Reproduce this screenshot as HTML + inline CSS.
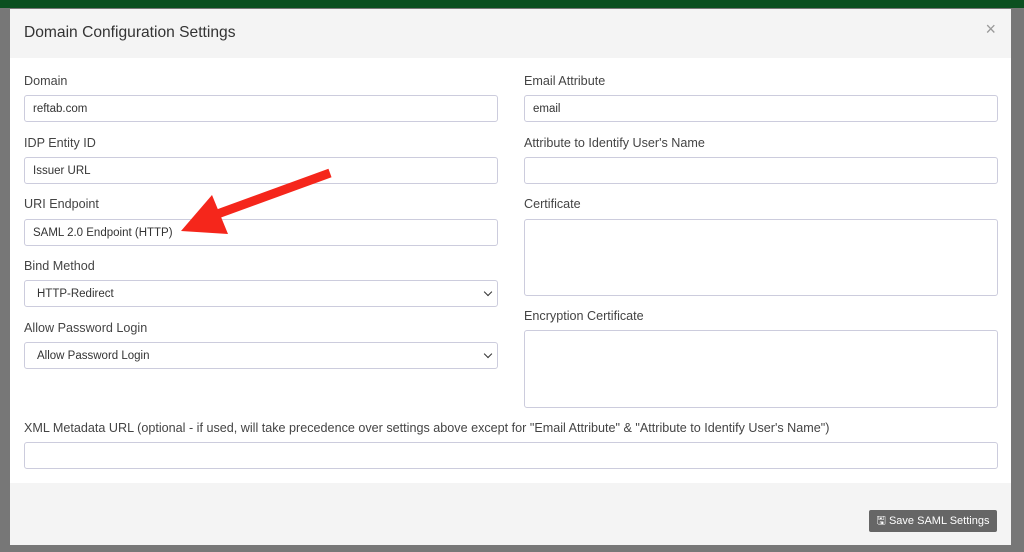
<!DOCTYPE html>
<html><head><style>
*{box-sizing:border-box;margin:0;padding:0}
body{width:1024px;height:552px;background:#777;font-family:"Liberation Sans",sans-serif;position:relative;overflow:hidden}
.green{position:absolute;left:0;top:0;width:1024px;height:8px;background:#0b5020}
.modal{position:absolute;left:10px;top:9px;width:1001px;height:536px;background:#fff}
.hdr{position:absolute;left:0;top:0;width:100%;height:49px;background:#f4f4f4}
.hdr h1{position:absolute;left:14px;top:15px;font-size:15.6px;font-weight:normal;color:#333}
.x{position:absolute;right:15px;top:10px;font-size:18px;color:#999}
.ftr{position:absolute;left:0;top:474px;width:100%;height:62px;background:#f4f4f4}
.btn{position:absolute;left:859px;top:27px;width:128px;height:22px;background:#666;border-radius:2px;color:#fff;font-size:11px;line-height:22px;text-align:center}
.lbl{position:absolute;font-size:12.6px;color:#444}
.in{position:absolute;border:1px solid #ccd;border-radius:3px;background:#fff;font-size:11.5px;color:#333;padding-left:8px;line-height:27px}
.sel:after{content:"";position:absolute;right:6px;top:8px;width:5px;height:5px;border-right:1.5px solid #333;border-bottom:1.5px solid #333;transform:rotate(45deg)}
</style></head><body>
<div class="green"></div>
<div class="modal">
<div class="hdr"><h1>Domain Configuration Settings</h1><div class="x">×</div></div>
<div class="ftr"><div class="btn">🖫 Save SAML Settings</div></div>
</div>
<div class="lbl" style="left:24px;top:74px">Domain</div>
<div class="in" style="left:24px;top:95px;width:474px;height:27px">reftab.com</div>
<div class="lbl" style="left:24px;top:136px">IDP Entity ID</div>
<div class="in" style="left:24px;top:157px;width:474px;height:27px">Issuer URL</div>
<div class="lbl" style="left:24px;top:197px">URI Endpoint</div>
<div class="in" style="left:24px;top:219px;width:474px;height:27px">SAML 2.0 Endpoint (HTTP)</div>
<div class="lbl" style="left:24px;top:259px">Bind Method</div>
<div class="in sel" style="left:24px;top:280px;width:474px;height:27px;padding-left:12px">HTTP-Redirect</div>
<div class="lbl" style="left:24px;top:321px">Allow Password Login</div>
<div class="in sel" style="left:24px;top:342px;width:474px;height:27px;padding-left:12px">Allow Password Login</div>
<div class="lbl" style="left:524px;top:74px">Email Attribute</div>
<div class="in" style="left:524px;top:95px;width:474px;height:27px">email</div>
<div class="lbl" style="left:524px;top:136px">Attribute to Identify User's Name</div>
<div class="in" style="left:524px;top:157px;width:474px;height:27px"></div>
<div class="lbl" style="left:524px;top:197px">Certificate</div>
<div class="in" style="left:524px;top:219px;width:474px;height:77px"></div>
<div class="lbl" style="left:524px;top:309px">Encryption Certificate</div>
<div class="in" style="left:524px;top:330px;width:474px;height:78px"></div>
<div class="lbl" style="left:24px;top:421px">XML Metadata URL (optional - if used, will take precedence over settings above except for "Email Attribute" &amp; "Attribute to Identify User's Name")</div>
<div class="in" style="left:24px;top:442px;width:974px;height:27px"></div>
<svg style="position:absolute;left:0;top:0" width="1024" height="552">
<line x1="330" y1="173" x2="212" y2="216" stroke="#f5261b" stroke-width="9"/>
<polygon points="212,195 181,231 228,234" fill="#f5261b"/>
</svg>
</body></html>
